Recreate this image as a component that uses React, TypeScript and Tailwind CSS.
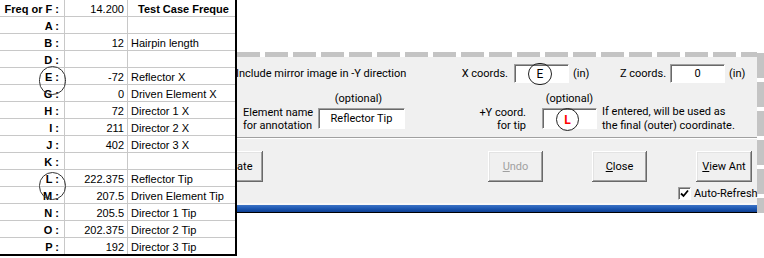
const rows = [
  { k: "Freq or F :", v: "14.200", d: "Test Case Freque", head: true },
  { k: "A :", v: "", d: "" },
  { k: "B :", v: "12", d: "Hairpin length" },
  { k: "D :", v: "", d: "" },
  { k: "E :", v: "-72", d: "Reflector X" },
  { k: "G :", v: "0", d: "Driven Element X" },
  { k: "H :", v: "72", d: "Director 1 X" },
  { k: "I :", v: "211", d: "Director 2 X" },
  { k: "J :", v: "402", d: "Director 3 X" },
  { k: "K :", v: "", d: "" },
  { k: "L :", v: "222.375", d: "Reflector Tip" },
  { k: "M :", v: "207.5", d: "Driven Element Tip" },
  { k: "N :", v: "205.5", d: "Director 1 Tip" },
  { k: "O :", v: "202.375", d: "Director 2 Tip" },
  { k: "P :", v: "192", d: "Director 3 Tip" },
];

const topDashes = Array.from({ length: 19 });
const sideDashes = Array.from({ length: 6 });

function Sheet() {
  return (
    <div className="relative z-10 w-[237px] h-[258px] shrink-0 bg-white">
      <div className="w-[237px] border-r-2 border-b-2 border-black font-['Liberation_Sans',Arial,sans-serif] text-[11px] text-black">
        {rows.map((r) => (
          <div key={r.k} className="flex h-[17px] border-b border-[#c8c8c8] last:border-b-0 last:h-[16px]">
            <div className="w-[65px] shrink-0 border-r border-[#c8c8c8] flex items-center justify-end pr-[5px] pt-[2px] font-bold whitespace-pre">
              {r.k}
            </div>
            <div className="w-[63px] shrink-0 border-r border-[#c8c8c8] flex items-center justify-end pr-[3px] pt-[2px]">
              {r.v}
            </div>
            <div
              className={
                r.head
                  ? "flex-1 flex items-center pl-[10px] pt-[2px] font-bold whitespace-nowrap overflow-hidden"
                  : "flex-1 flex items-center pl-[3px] pt-[2px] whitespace-nowrap overflow-hidden"
              }
            >
              {r.d}
            </div>
          </div>
        ))}
      </div>
    </div>
  );
}

function Field({ w, h, children }: { w: string; h: string; children?: React.ReactNode }) {
  return (
    <div
      className={`${w} ${h} shrink-0 bg-white border border-t-[#a0a0a0] border-l-[#a0a0a0] border-r-white border-b-white shadow-[inset_1px_1px_0_#696969] flex items-center justify-center whitespace-nowrap`}
    >
      {children}
    </div>
  );
}

function Btn({ ml, w, children, off }: { ml: string; w: string; children: React.ReactNode; off?: boolean }) {
  return (
    <div
      className={`${ml} ${w} h-[31px] shrink-0 bg-[#f0f0f0] flex items-center justify-center whitespace-nowrap shadow-[inset_-1px_-1px_0_#696969,inset_1px_1px_0_#ffffff,inset_-2px_-2px_0_#a0a0a0,inset_2px_2px_0_#e3e3e3] ${off ? "text-[#a0a0a0]" : "text-black"}`}
    >
      {children}
    </div>
  );
}

function Dialog() {
  return (
    <div className="flex-1 flex overflow-hidden">
      <div className="w-[520px] shrink-0 flex flex-col">
        <div className="h-[52px] bg-white" />
        <div className="h-[5px] flex gap-[5px] bg-white">
          {topDashes.map((_, i) => (
            <div key={i} className="w-[23px] h-[5px] shrink-0 bg-[#c4c4c4]" />
          ))}
        </div>
        <div className="h-[146px] bg-[#f0f0f0] flex flex-col font-['Roboto',sans-serif] text-[11px] leading-[13px] text-black">
          <div className="mt-[7px] h-[19px] flex items-center">
            <span className="w-[224px] shrink-0 -ml-[1px] whitespace-nowrap">Include mirror image in -Y direction</span>
            <span className="w-[54px] shrink-0 pr-[6px] text-right whitespace-nowrap">X coords.</span>
            <Field w="w-[55px]" h="h-[19px]" />
            <span className="ml-[4px] w-[47px] shrink-0">(in)</span>
            <span className="w-[50px] shrink-0 pr-[6px] text-right whitespace-nowrap">Z coords.</span>
            <Field w="w-[55px]" h="h-[19px]">0</Field>
            <span className="ml-[4px]">(in)</span>
          </div>
          <div className="h-[25px] flex items-end pb-[3px]">
            <span className="ml-[78px] w-[87px] shrink-0 text-center">(optional)</span>
            <span className="ml-[140px] w-[55px] shrink-0 text-center whitespace-nowrap">(optional)</span>
          </div>
          <div className="h-[21px] flex items-center">
            <div className="ml-[6px] w-[75px] shrink-0 leading-[13px] pt-[1px] whitespace-nowrap">
              <div>Element name</div>
              <div>for annotation</div>
            </div>
            <Field w="w-[87px]" h="h-[21px]">Reflector Tip</Field>
            <div className="w-[121px] shrink-0 text-right leading-[13px] pt-[1px] whitespace-nowrap">
              <div>+Y coord.</div>
              <div>for tip</div>
            </div>
            <div className="ml-[16px]">
              <Field w="w-[55px]" h="h-[21px]" />
            </div>
            <div className="ml-[5px] leading-[14px] pt-[1px] whitespace-nowrap">
              <div>If entered, will be used as</div>
              <div>the final (outer) coordinate.</div>
            </div>
          </div>
          <div className="mt-[8px] h-[1px] bg-[#a0a0a0]" />
          <div className="h-[1px] bg-white" />
          <div className="mt-[12px] flex">
            <Btn ml="-ml-[30px]" w="w-[56px]">Update</Btn>
            <Btn ml="ml-[225px]" w="w-[55px]" off>
              <span><span className="underline">U</span>ndo</span>
            </Btn>
            <Btn ml="ml-[49px]" w="w-[55px]">
              <span><span className="underline">C</span>lose</span>
            </Btn>
            <Btn ml="ml-[49px]" w="w-[56px]">
              <span><span className="underline">V</span>iew Ant</span>
            </Btn>
          </div>
          <div className="mt-[5px] flex items-center">
            <div className="ml-[441px] w-[13px] h-[13px] shrink-0 bg-white border border-t-[#a0a0a0] border-l-[#a0a0a0] border-r-white border-b-white shadow-[inset_1px_1px_0_#696969] flex items-center justify-center">
              <svg width="9" height="9" viewBox="0 0 9 9">
                <path d="M1 4.5 L3.5 7 L8 1.5" stroke="#000" strokeWidth="1.8" fill="none" />
              </svg>
            </div>
            <span className="ml-[3px] whitespace-nowrap">Auto-Refresh</span>
          </div>
        </div>
        <div className="h-[2px] bg-[#f8f8f8]" />
        <div className="h-[7px] bg-gradient-to-b from-[#3d74c6] via-[#1d58b2] to-[#0e3f92]" />
        <div className="h-[1px] bg-black" />
        <div className="flex-1 bg-white" />
      </div>
      <div className="w-[7px] shrink-0 flex flex-col">
        <div className="h-[53px] shrink-0 bg-white" />
        <div className="flex flex-col gap-[4px] h-[160px] overflow-hidden">
          {sideDashes.map((_, i) => (
            <div key={i} className="h-[25px] w-[7px] shrink-0 bg-[#c4c4c4]" />
          ))}
        </div>
      </div>
    </div>
  );
}

export default function App() {
  return (
    <div className="relative w-[764px] h-[258px] bg-white overflow-hidden flex">
      <Sheet />
      <Dialog />
      <div className="absolute z-20 left-[39px] top-[66px] w-[27px] h-[29px] rounded-full border border-[#333]" />
      <div className="absolute z-20 left-[39px] top-[172px] w-[27px] h-[28px] rounded-full border border-[#333]" />
      <div className="absolute z-20 left-[528px] top-[63px] w-[24px] h-[22px] rounded-full border border-[#222] flex items-center justify-center font-['Roboto',sans-serif] text-[12px]">
        E
      </div>
      <div className="absolute z-20 left-[556px] top-[108px] w-[23px] h-[23px] rounded-full border border-[#222] flex items-center justify-center font-['Roboto',sans-serif] text-[12px] font-bold text-[#ff0000]">
        L
      </div>
    </div>
  );
}
